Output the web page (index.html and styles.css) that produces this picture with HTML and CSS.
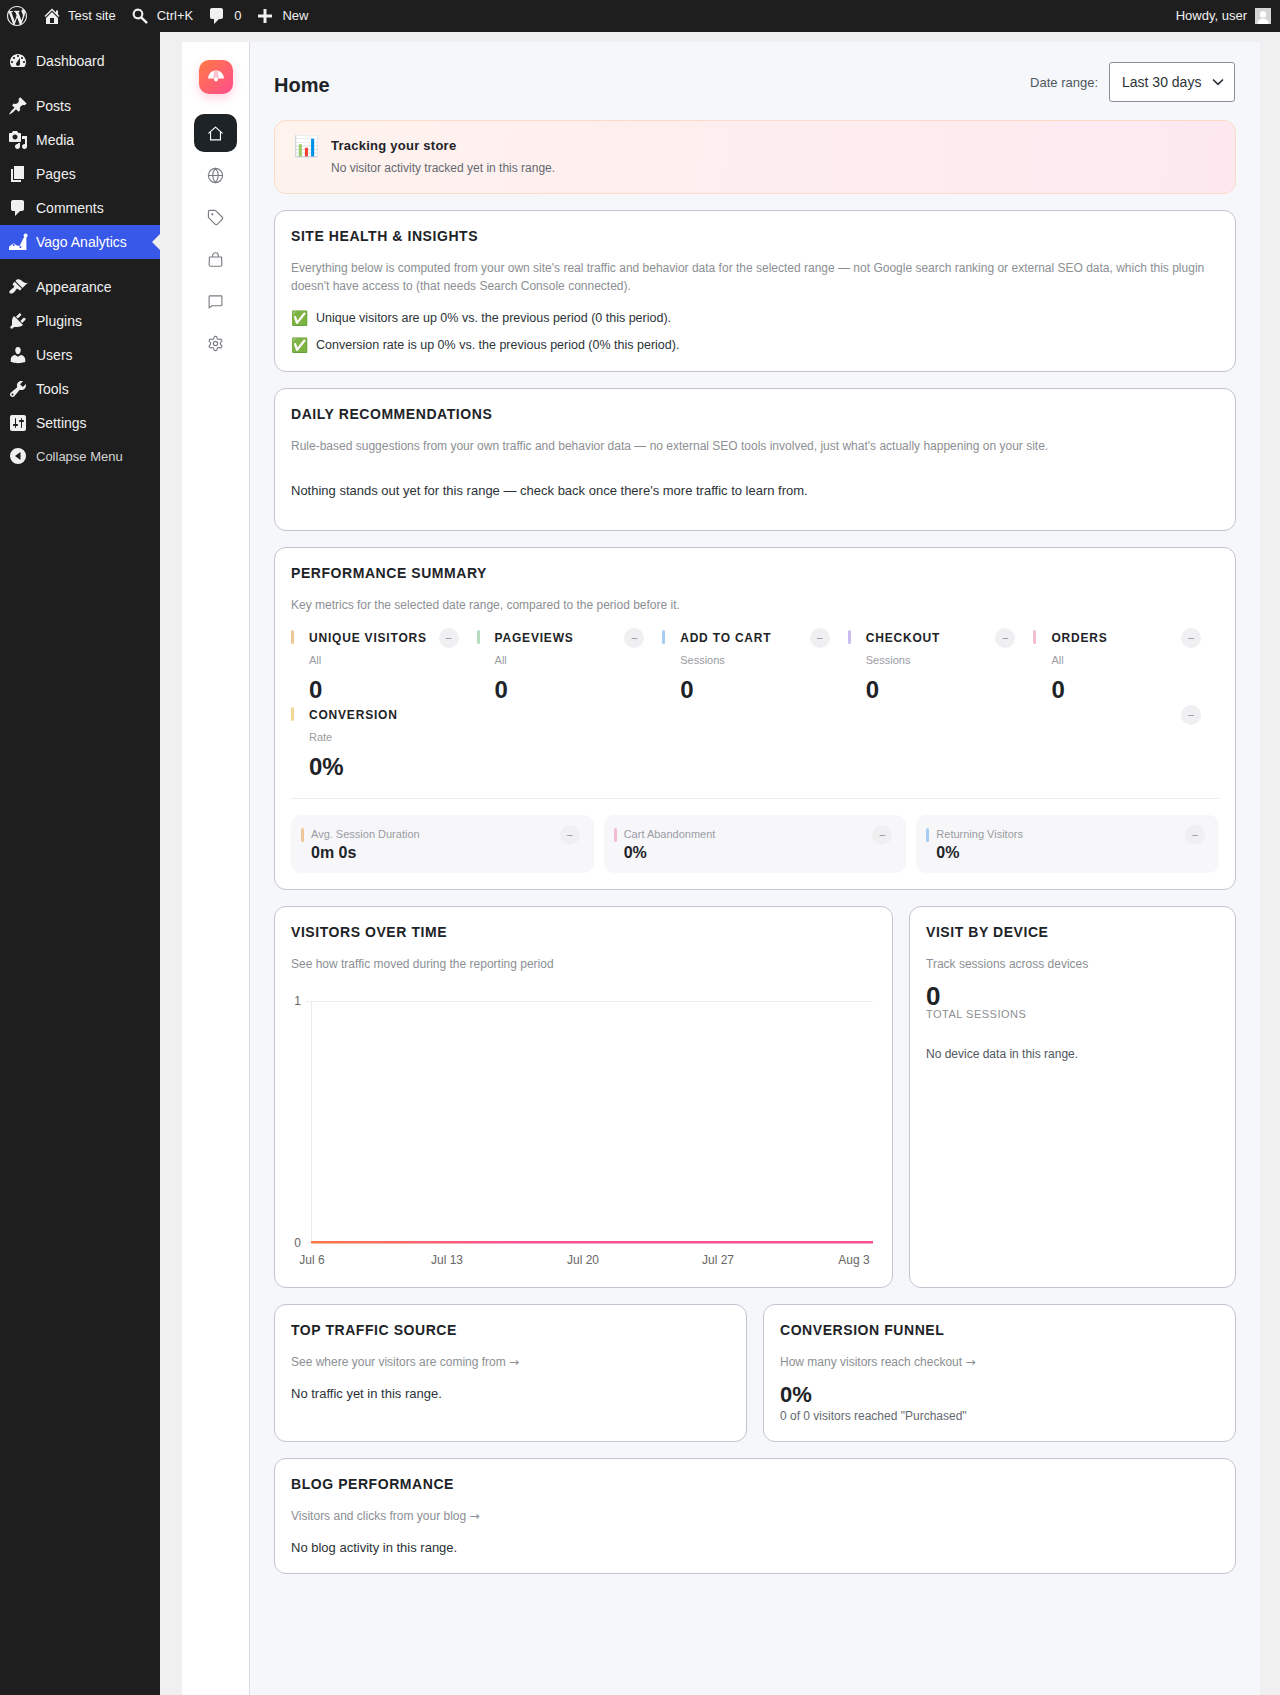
FILE: index.html
```html
<!DOCTYPE html>
<html lang="en">
<head>
    <meta charset="UTF-8">
    <meta name="viewport" content="width=device-width, initial-scale=1.0">
    <title>Home - Vago Analytics</title>
    <link rel="stylesheet" href="styles.css">
</head>
<body>
    <header class="adminbar">
        <div class="adminbar-left">
            <svg class="bar-logo" viewBox="0 0 20 20"><path d="M20 10c0-5.51-4.49-10-10-10C4.48 0 0 4.49 0 10c0 5.52 4.48 10 10 10 5.51 0 10-4.48 10-10zM7.78 15.37L4.37 6.22c.55-.02 1.17-.08 1.17-.08.5-.06.44-1.13-.06-1.11 0 0-1.45.11-2.37.11-.18 0-.37 0-.58-.01C4.12 2.69 6.87 1.11 10 1.11c2.33 0 4.45.87 6.05 2.34-.68-.11-1.65.39-1.65 1.58 0 .74.45 1.36.9 2.1.35.61.55 1.36.55 2.46 0 1.49-1.4 5-1.4 5l-3.03-8.37c.54-.02.82-.17.82-.17.5-.05.44-1.25-.06-1.22 0 0-1.44.12-2.38.12-.87 0-2.33-.12-2.33-.12-.5-.03-.56 1.2-.06 1.22l.92.08 1.26 3.41zM17.41 10c.24-.64.74-1.87.43-4.25.7 1.29 1.05 2.71 1.05 4.25 0 3.29-1.73 6.24-4.4 7.78.97-2.59 1.94-5.2 2.92-7.78zM6.1 18.09C3.12 16.65 1.11 13.53 1.11 10c0-1.3.23-2.48.72-3.59C3.25 10.3 4.67 14.2 6.1 18.09zm4.03-6.63l2.58 6.98c-.86.29-1.76.45-2.71.45-.79 0-1.57-.11-2.29-.33.81-2.38 1.62-4.74 2.42-7.1z"/></svg>
            <a class="bar-item bar-site" href="#">
                <svg viewBox="0 0 20 20"><path d="M16 8.5l1.53 1.53-1.06 1.06L10 4.62l-6.47 6.47-1.06-1.06L10 2.5l4 4v-2h2v4zm-6-2.46l6 5.99V18H4v-5.97zM12 17v-5H8v5h4z"/></svg>
                Test site
            </a>
            <a class="bar-item" href="#">
                <svg viewBox="0 0 20 20"><path fill-rule="evenodd" d="M8 2.5a5.5 5.5 0 0 1 4.6 8.5l4.6 4.6c.5.5.5 1.3 0 1.7-.5.5-1.2.5-1.7 0L10.9 12.7A5.5 5.5 0 1 1 8 2.5zm0 2.2a3.3 3.3 0 1 0 0 6.6 3.3 3.3 0 0 0 0-6.6z"/></svg>
                Ctrl+K
            </a>
            <a class="bar-item" href="#">
                <svg viewBox="0 0 20 20"><path d="M5 2h9c1.1 0 2 .9 2 2v7c0 1.1-.9 2-2 2h-2l-5 5v-5H5c-1.1 0-2-.9-2-2V4c0-1.1.9-2 2-2z"/></svg>
                0
            </a>
            <a class="bar-item" href="#">
                <svg viewBox="0 0 20 20"><path d="M8.5 3h3v5.5H17v3h-5.5V17h-3v-5.5H3v-3h5.5z"/></svg>
                New
            </a>
        </div>
        <div class="adminbar-right">
            Howdy, user
            <svg class="avatar" viewBox="0 0 16 16"><rect width="16" height="16" fill="#d5d5d5"/><circle cx="8" cy="6.4" r="3.2" fill="#fff"/><path d="M2.5 16c0-3.6 2.4-5.6 5.5-5.6s5.5 2 5.5 5.6z" fill="#fff"/></svg>
        </div>
    </header>

    <div class="layout">
        <nav class="sidebar">
            <ul class="menu">
                <li class="menu-item"><svg viewBox="0 0 20 20"><path fill-rule="evenodd" d="M3.76 16h12.48c1.1-1.37 1.76-3.11 1.76-5 0-4.42-3.58-8-8-8s-8 3.58-8 8c0 1.89.66 3.63 1.76 5zM10 4c.55 0 1 .45 1 1s-.45 1-1 1-1-.45-1-1 .45-1 1-1zM6 6c.55 0 1 .45 1 1s-.45 1-1 1-1-.45-1-1 .45-1 1-1zm8 0c.55 0 1 .45 1 1s-.45 1-1 1-1-.45-1-1 .45-1 1-1zm-5.37 5.55L12 7v6c0 1.1-.9 2-2 2s-2-.9-2-2c0-.57.24-1.08.63-1.45zM4 10c.55 0 1 .45 1 1s-.45 1-1 1-1-.45-1-1 .45-1 1-1zm12 0c.55 0 1 .45 1 1s-.45 1-1 1-1-.45-1-1 .45-1 1-1z"/></svg>Dashboard</li>
            </ul>
            <ul class="menu">
                <li class="menu-item"><svg viewBox="0 0 20 20"><path d="M10.44 3.02l1.82-1.82 6.36 6.35-1.83 1.82c-1.05-.68-2.48-.57-3.41.36l-.75.75c-.92.93-1.04 2.35-.35 3.41l-1.83 1.82-2.41-2.41-2.8 2.79c-.42.42-3.38 2.71-3.8 2.29s1.86-3.39 2.28-3.81l2.79-2.79L4.1 9.36l1.83-1.82c1.05.69 2.48.57 3.4-.36l.75-.75c.93-.92 1.05-2.35.36-3.41z"/></svg>Posts</li>
                <li class="menu-item"><svg viewBox="0 0 20 20"><path d="M13 11V4c0-.55-.45-1-1-1h-1.67L9 1H5L3.67 3H2c-.55 0-1 .45-1 1v7c0 .55.45 1 1 1h10c.55 0 1-.45 1-1zM7 4.5c1.38 0 2.5 1.12 2.5 2.5S8.38 9.5 7 9.5 4.5 8.38 4.5 7 5.62 4.5 7 4.5zM14 6h5v10.5c0 1.38-1.12 2.5-2.5 2.5S14 17.88 14 16.5s1.12-2.5 2.5-2.5c.17 0 .34.02.5.05V9h-3V6zm-4 8.05V13h2v3.5c0 1.38-1.12 2.5-2.5 2.5S7 17.88 7 16.5 8.12 14 9.5 14c.17 0 .34.02.5.05z"/></svg>Media</li>
                <li class="menu-item"><svg viewBox="0 0 20 20"><path d="M6 15V2h10v13H6zm-1 1h8v2H3V5h2v11z"/></svg>Pages</li>
                <li class="menu-item"><svg viewBox="0 0 20 20"><path d="M5 2h9c1.1 0 2 .9 2 2v7c0 1.1-.9 2-2 2h-2l-5 5v-5H5c-1.1 0-2-.9-2-2V4c0-1.1.9-2 2-2z"/></svg>Comments</li>
                <li class="menu-item current"><svg viewBox="0 0 20 20"><path d="M1 18v-3.2l4.6-3.6 3.6 2.6h2.6l3.4-7.4 2-2.2 1.2.6V18z"/><circle cx="17.6" cy="3.6" r="2"/><circle cx="5.6" cy="13" r="1" fill="#3858e9"/><circle cx="12.4" cy="15" r="1" fill="#3858e9"/></svg>Vago Analytics</li>
            </ul>
            <ul class="menu">
                <li class="menu-item"><svg viewBox="0 0 20 20"><path d="M14.48 11.06L7.41 3.99l1.5-1.5c.5-.56 2.3-.47 3.51.32 1.21.8 1.43 1.28 2.91 2.1 1.18.64 2.45 1.26 4.45.85zm-.71.71L6.7 4.7 4.93 6.47c-.39.39-.39 1.02 0 1.41l1.06 1.06c.39.39.39 1.03 0 1.42-.6.6-1.43 1.11-2.21 1.69-.35.26-.7.53-1.01.84C1.43 13.23.91 15.28 1.8 16.17c.89.89 2.94.37 4.28-.97.31-.31.58-.66.84-1.01.58-.78 1.09-1.61 1.69-2.21.39-.39 1.03-.39 1.42 0l1.06 1.06c.39.39 1.02.39 1.41 0z"/></svg>Appearance</li>
                <li class="menu-item"><svg viewBox="0 0 20 20"><path d="M13.11 4.36L9.87 7.6 8 5.73l3.24-3.24c.35-.34 1.05-.2 1.56.32.52.51.66 1.21.31 1.55zm-8 1.77l.91-1.12 9.01 9.01-1.19.84c-.71.71-2.63 1.16-3.82 1.16H6.14L4.9 17.26c-.59.59-1.54.59-2.12 0-.59-.58-.59-1.53 0-2.12l1.24-1.24v-3.88c0-1.13.4-3.19 1.09-3.89zm7.26 3.97l3.24-3.24c.34-.35 1.04-.21 1.55.31.52.51.66 1.21.31 1.55l-3.24 3.25z"/></svg>Plugins</li>
                <li class="menu-item"><svg viewBox="0 0 20 20"><path d="M10 9.25c-2.27 0-2.73-3.44-2.73-3.44C7 4.02 7.82 2 9.97 2c2.16 0 2.98 2.02 2.71 3.81 0 0-.41 3.44-2.68 3.44zm0 2.57L12.72 10c2.39 0 4.52 2.33 4.52 4.53v2.49s-3.65 1.13-7.24 1.13c-3.65 0-7.24-1.13-7.24-1.13v-2.49c0-2.25 1.94-4.48 4.47-4.48z"/></svg>Users</li>
                <li class="menu-item"><svg viewBox="0 0 20 20"><path d="M16.68 9.77c-1.34 1.34-3.3 1.67-4.95.99l-5.41 6.52c-.99.99-2.59.99-3.58 0s-.99-2.59 0-3.57l6.52-5.42c-.68-1.65-.35-3.61.99-4.95 1.28-1.28 3.12-1.62 4.72-1.06l-2.89 2.89 2.82 2.82 2.86-2.87c.53 1.58.18 3.39-1.08 4.65zM3.81 16.21c.4.39 1.04.39 1.43 0 .4-.4.4-1.04 0-1.43-.39-.4-1.03-.4-1.43 0-.39.39-.39 1.03 0 1.43z"/></svg>Tools</li>
                <li class="menu-item"><svg viewBox="0 0 20 20"><path d="M18 16V4c0-1.1-.9-2-2-2H4c-1.1 0-2 .9-2 2v12c0 1.1.9 2 2 2h12c1.1 0 2-.9 2-2zM8 11h1c.55 0 1 .45 1 1s-.45 1-1 1H8v1.5c0 .28-.22.5-.5.5s-.5-.22-.5-.5V13H6c-.55 0-1-.45-1-1s.45-1 1-1h1V5.5c0-.28.22-.5.5-.5s.5.22.5.5V11zm5-2h-1c-.55 0-1-.45-1-1s.45-1 1-1h1V5.5c0-.28.22-.5.5-.5s.5.22.5.5V7h1c.55 0 1 .45 1 1s-.45 1-1 1h-1v5.5c0 .28-.22.5-.5.5s-.5-.22-.5-.5V9z"/></svg>Settings</li>
                <li class="menu-item collapse"><svg viewBox="0 0 20 20"><path fill-rule="evenodd" d="M10 2a8 8 0 1 1 0 16 8 8 0 0 1 0-16zm2.5 4L7 10l5.500 4z"/></svg>Collapse Menu</li>
            </ul>
        </nav>

        <div class="wrap">
            <div class="app">
                <aside class="app-nav">
                    <div class="app-logo">
                        <svg viewBox="0 0 20 20"><path d="M2 11.5a8 8 0 0 1 16 0z" fill="#fff"/><path d="M7 11.500L8.300 3.700a8 8 0 0 1 3.400 0L13 11.500z" fill="#ffc4cf"/><circle cx="10" cy="12.500" r="2" fill="#fff"/></svg>
                    </div>
                    <a class="nav-link active" href="#"><svg viewBox="0 0 24 24"><path d="M2.500 11.500 12 3l9.500 8.500M5 9.500V21h14V9.500"/></svg></a>
                    <a class="nav-link" href="#"><svg viewBox="0 0 24 24"><circle cx="12" cy="12" r="10"/><path d="M2 12h20M12 2c-5.300 6-5.300 14 0 20M12 2c5.300 6 5.300 14 0 20"/></svg></a>
                    <a class="nav-link" href="#"><svg viewBox="0 0 24 24"><path d="M12.586 2.586A2 2 0 0 0 11.172 2H4a2 2 0 0 0-2 2v7.172a2 2 0 0 0 .586 1.414l8.704 8.704a2.426 2.426 0 0 0 3.420 0l6.580-6.580a2.426 2.426 0 0 0 0-3.420z"/><circle cx="7.500" cy="7.500" r=".8"/></svg></a>
                    <a class="nav-link" href="#"><svg viewBox="0 0 24 24"><path d="M3.500 8.500h17l.5 11a2 2 0 0 1-2 2H5a2 2 0 0 1-2-2zM8 8.500V6.500a4 4 0 0 1 8 0v2"/></svg></a>
                    <a class="nav-link" href="#"><svg viewBox="0 0 24 24"><path d="M4 4h16a1 1 0 0 1 1 1v12a1 1 0 0 1-1 1H7l-4 3V5a1 1 0 0 1 1-1z"/></svg></a>
                    <a class="nav-link" href="#"><svg viewBox="0 0 24 24"><path d="M12.220 2h-.44a2 2 0 0 0-2 2v.18a2 2 0 0 1-1 1.730l-.43.250a2 2 0 0 1-2 0l-.15-.08a2 2 0 0 0-2.730.730l-.22.380a2 2 0 0 0 .730 2.730l.15.100a2 2 0 0 1 1 1.720v.510a2 2 0 0 1-1 1.740l-.15.090a2 2 0 0 0-.730 2.730l.22.380a2 2 0 0 0 2.730.730l.15-.08a2 2 0 0 1 2 0l.43.250a2 2 0 0 1 1 1.730V20a2 2 0 0 0 2 2h.44a2 2 0 0 0 2-2v-.18a2 2 0 0 1 1-1.730l.43-.250a2 2 0 0 1 2 0l.15.08a2 2 0 0 0 2.730-.730l.22-.390a2 2 0 0 0-.730-2.730l-.15-.08a2 2 0 0 1-1-1.740v-.5a2 2 0 0 1 1-1.740l.15-.090a2 2 0 0 0 .730-2.730l-.22-.380a2 2 0 0 0-2.730-.730l-.15.08a2 2 0 0 1-2 0l-.43-.250a2 2 0 0 1-1-1.730V4a2 2 0 0 0-2-2z"/><circle cx="12" cy="12" r="3"/></svg></a>
                </aside>

                <main class="app-main">
                    <div class="page-head">
                        <h1>Home</h1>
                        <div class="range">
                            <span class="range-label">Date range:</span>
                            <div class="range-select">Last 30 days
                                <svg viewBox="0 0 12 8"><path d="M1 1.500 6 6.300l5-4.800"/></svg>
                            </div>
                        </div>
                    </div>

                    <section class="banner">
                        <span class="banner-icon">📊</span>
                        <div>
                            <div class="banner-title">Tracking your store</div>
                            <div class="banner-text">No visitor activity tracked yet in this range.</div>
                        </div>
                    </section>

                    <section class="card">
                        <h2>Site health &amp; insights</h2>
                        <p class="desc">Everything below is computed from your own site's real traffic and behavior data for the selected range — not Google search ranking or external SEO data, which this plugin doesn't have access to (that needs Search Console connected).</p>
                        <ul class="insights">
                            <li><span class="emoji">✅</span>Unique visitors are up 0% vs. the previous period (0 this period).</li>
                            <li><span class="emoji">✅</span>Conversion rate is up 0% vs. the previous period (0% this period).</li>
                        </ul>
                    </section>

                    <section class="card">
                        <h2>Daily recommendations</h2>
                        <p class="desc">Rule-based suggestions from your own traffic and behavior data — no external SEO tools involved, just what's actually happening on your site.</p>
                        <p class="empty-note">Nothing stands out yet for this range — check back once there's more traffic to learn from.</p>
                    </section>

                    <section class="card">
                        <h2>Performance summary</h2>
                        <p class="desc">Key metrics for the selected date range, compared to the period before it.</p>
                        <div class="metrics">
                            <div class="metric"><i class="tick orange"></i><div class="metric-body"><div class="metric-head"><span class="metric-name">Unique visitors</span><span class="delta">–</span></div><div class="metric-sub">All</div><div class="metric-value">0</div></div></div>
                            <div class="metric"><i class="tick green"></i><div class="metric-body"><div class="metric-head"><span class="metric-name">Pageviews</span><span class="delta">–</span></div><div class="metric-sub">All</div><div class="metric-value">0</div></div></div>
                            <div class="metric"><i class="tick blue"></i><div class="metric-body"><div class="metric-head"><span class="metric-name">Add to cart</span><span class="delta">–</span></div><div class="metric-sub">Sessions</div><div class="metric-value">0</div></div></div>
                            <div class="metric"><i class="tick purple"></i><div class="metric-body"><div class="metric-head"><span class="metric-name">Checkout</span><span class="delta">–</span></div><div class="metric-sub">Sessions</div><div class="metric-value">0</div></div></div>
                            <div class="metric"><i class="tick pink"></i><div class="metric-body"><div class="metric-head"><span class="metric-name">Orders</span><span class="delta">–</span></div><div class="metric-sub">All</div><div class="metric-value">0</div></div></div>
                            <div class="metric"><i class="tick yellow"></i><div class="metric-body"><div class="metric-head"><span class="metric-name">Conversion</span><span class="delta">–</span></div><div class="metric-sub">Rate</div><div class="metric-value">0%</div></div></div>
                        </div>
                        <div class="minis">
                            <div class="mini"><i class="tick orange"></i><div class="mini-body"><div class="mini-label">Avg. Session Duration</div><div class="mini-value">0m 0s</div></div><span class="delta">–</span></div>
                            <div class="mini"><i class="tick pink"></i><div class="mini-body"><div class="mini-label">Cart Abandonment</div><div class="mini-value">0%</div></div><span class="delta">–</span></div>
                            <div class="mini"><i class="tick blue"></i><div class="mini-body"><div class="mini-label">Returning Visitors</div><div class="mini-value">0%</div></div><span class="delta">–</span></div>
                        </div>
                    </section>

                    <div class="row row-chart">
                        <section class="card">
                            <h2>Visitors over time</h2>
                            <p class="desc">See how traffic moved during the reporting period</p>
                            <svg class="chart" viewBox="0 0 585 286">
                                <defs>
                                    <linearGradient id="lineGrad" x1="0" x2="1" y1="0" y2="0">
                                        <stop offset="0" stop-color="#ff7a45"/>
                                        <stop offset=".38" stop-color="#ff4f96"/>
                                        <stop offset="1" stop-color="#ff4f96"/>
                                    </linearGradient>
                                </defs>
                                <path class="grid-line" d="M15 16.500H582M20.500 16V258M15 257.500H21"/>
                                <rect x="20" y="256" width="562" height="2.500" fill="url(#lineGrad)"/>
                                <text x="10" y="20" text-anchor="end">1</text>
                                <text x="10" y="262" text-anchor="end">0</text>
                                <text x="21" y="279" text-anchor="middle">Jul 6</text>
                                <text x="156" y="279" text-anchor="middle">Jul 13</text>
                                <text x="292" y="279" text-anchor="middle">Jul 20</text>
                                <text x="427" y="279" text-anchor="middle">Jul 27</text>
                                <text x="563" y="279" text-anchor="middle">Aug 3</text>
                            </svg>
                        </section>
                        <section class="card">
                            <h2>Visit by device</h2>
                            <p class="desc">Track sessions across devices</p>
                            <div class="device-total">0</div>
                            <div class="device-label">Total sessions</div>
                            <p class="device-empty">No device data in this range.</p>
                        </section>
                    </div>

                    <div class="row row-half">
                        <section class="card">
                            <h2>Top traffic source</h2>
                            <p class="desc">See where your visitors are coming from <span class="arrow">→</span></p>
                            <p class="plain">No traffic yet in this range.</p>
                        </section>
                        <section class="card">
                            <h2>Conversion funnel</h2>
                            <p class="desc">How many visitors reach checkout <span class="arrow">→</span></p>
                            <div class="funnel-value">0%</div>
                            <div class="funnel-sub">0 of 0 visitors reached "Purchased"</div>
                        </section>
                    </div>

                    <section class="card">
                        <h2>Blog performance</h2>
                        <p class="desc">Visitors and clicks from your blog <span class="arrow">→</span></p>
                        <p class="plain">No blog activity in this range.</p>
                    </section>
                </main>
            </div>
        </div>
    </div>
</body>
</html>
```

FILE: styles.css
```css
* {
    box-sizing: border-box;
}

body {
    margin: 0;
    min-height: 1695px;
    background-color: #f0f0f0;
    font-family: "Liberation Sans", Arial, sans-serif;
    color: #1d2327;
    display: flex;
    flex-direction: column;
}

a {
    color: inherit;
    text-decoration: none;
}

/* admin bar */
.adminbar {
    height: 32px;
    background-color: #1e1e1e;
    color: #f0f0f0;
    font-size: 13px;
    display: flex;
    align-items: center;
    justify-content: space-between;
    padding: 0 9px 1px 7px;
}

.adminbar svg {
    fill: #f0f0f0;
}

.adminbar-left,
.adminbar-right,
.bar-item {
    display: flex;
    align-items: center;
}

.bar-logo {
    width: 20px;
    height: 20px;
    margin-right: 15px;
}

.bar-item {
    gap: 7px;
    margin-right: 14px;
}

.bar-item svg {
    width: 20px;
    height: 20px;
}

.bar-site {
    gap: 6px;
}

.adminbar-right {
    gap: 8px;
}

.avatar {
    width: 16px;
    height: 16px;
}

/* wp sidebar */
.layout {
    flex: 1;
    display: flex;
}

.sidebar {
    width: 160px;
    flex-shrink: 0;
    background-color: #1e1e1e;
    padding-top: 12px;
}

.menu {
    list-style-type: none;
    margin: 0 0 11px;
    padding: 0;
}

.menu-item {
    position: relative;
    height: 34px;
    display: flex;
    align-items: center;
    gap: 8px;
    padding-left: 8px;
    font-size: 14px;
    color: #f0f0f0;
}

.menu-item svg {
    width: 20px;
    height: 20px;
    flex-shrink: 0;
    fill: #f0f0f0;
}

.menu-item.current {
    background-color: #3858e9;
    color: #fff;
}

.menu-item.current svg {
    fill: #fff;
}

.menu-item.current::after {
    content: "";
    position: absolute;
    right: 0;
    top: 50%;
    margin-top: -8px;
    border: 8px solid transparent;
    border-right-color: #f0f0f0;
    border-left-width: 0;
}

.menu-item.collapse {
    height: 32px;
    font-size: 13px;
    color: #d5d5d5;
}

/* plugin shell */
.wrap {
    flex: 1;
    min-width: 0;
    padding: 10px 20px 0 22px;
    display: flex;
}

.app {
    flex: 1;
    min-width: 0;
    display: flex;
    background-color: #f5f7fb;
}

.app-nav {
    width: 68px;
    flex-shrink: 0;
    background-color: #fff;
    border-right: 1px solid #dcdcde;
    display: flex;
    flex-direction: column;
    align-items: center;
    padding-top: 18px;
    gap: 4px;
}

.app-logo {
    width: 34px;
    height: 34px;
    margin-bottom: 16px;
    border-radius: 10px;
    background: linear-gradient(135deg, #ff7a45, #ff4d8d);
    box-shadow: 0 4px 10px rgba(255, 77, 141, 0.25);
    display: flex;
    align-items: center;
    justify-content: center;
}

.app-logo svg {
    width: 20px;
    height: 20px;
}

.nav-link {
    width: 43px;
    height: 38px;
    margin-left: -1px;
    border-radius: 10px;
    color: #787c82;
    display: flex;
    align-items: center;
    justify-content: center;
}

.nav-link svg {
    width: 17px;
    height: 17px;
    fill: none;
    stroke: currentColor;
    stroke-width: 1.6;
    stroke-linecap: round;
    stroke-linejoin: round;
}

.nav-link.active {
    background-color: #1d2327;
    color: #fff;
}

.app-main {
    flex: 1;
    min-width: 0;
    padding: 20px 24px 24px;
}

.page-head {
    display: flex;
    justify-content: space-between;
    align-items: center;
    height: 40px;
    margin-bottom: 18px;
}

.page-head h1 {
    margin: 0;
    padding-top: 6px;
    font-size: 20px;
    font-weight: 700;
}

.range {
    display: flex;
    align-items: center;
    gap: 11px;
}

.range-label {
    font-size: 13px;
    color: #50575e;
}

.range-select {
    width: 126px;
    height: 40px;
    padding: 0 10px 0 12px;
    margin-right: 1px;
    background-color: #fff;
    border: 1px solid #8c8f94;
    border-radius: 3px;
    font-size: 14px;
    color: #2c3338;
    display: flex;
    align-items: center;
    justify-content: space-between;
}

.range-select svg {
    width: 12px;
    height: 8px;
    fill: none;
    stroke: #2c3338;
    stroke-width: 1.7;
}

.banner {
    height: 74px;
    margin-bottom: 16px;
    padding: 16px 19px 0;
    display: flex;
    gap: 12px;
    border: 1px solid #fbdcc9;
    border-radius: 12px;
    background: linear-gradient(95deg, #fff3ee, #fde8f0);
}

.banner-icon {
    font-size: 20px;
    line-height: 18px;
}

.banner-title {
    font-size: 13px;
    font-weight: 700;
    letter-spacing: 0.25px;
    line-height: 18px;
}

.banner-text {
    margin-top: 5px;
    font-size: 12px;
    line-height: 16px;
    color: #646970;
}

/* cards */
.card {
    background-color: #fff;
    border: 1px solid #c3c4cf;
    border-radius: 12px;
    padding: 16px;
    margin-bottom: 16px;
}

.card h2 {
    margin: 0;
    font-size: 14px;
    line-height: 18px;
    font-weight: 700;
    letter-spacing: 0.56px;
    text-transform: uppercase;
}

.desc {
    margin: 14px 0 0;
    font-size: 12px;
    line-height: 18px;
    color: #8c8f94;
}

.arrow {
    font-family: "DejaVu Sans", sans-serif;
}

.insights {
    list-style-type: none;
    margin: 14px 0 0;
    padding: 0 0 1px;
    display: flex;
    flex-direction: column;
    gap: 9px;
}

.insights li {
    display: flex;
    align-items: center;
    gap: 8px;
    font-size: 12.5px;
    line-height: 18px;
    color: #2c3338;
}

.emoji {
    font-size: 14px;
    line-height: 18px;
}

.empty-note {
    margin: 11px 0 0;
    padding: 16px 0 14px;
    font-size: 13px;
    line-height: 18px;
    color: #2c3338;
}

/* performance summary */
.metrics {
    display: flex;
    flex-wrap: wrap;
    margin-top: 14px;
    padding-bottom: 16px;
    border-bottom: 1px solid #ececf0;
}

.metric {
    flex: 1 1 20%;
    display: flex;
    gap: 15px;
    padding-right: 18px;
    height: 77px;
}

.tick {
    display: block;
    width: 3px;
    height: 14px;
    margin-top: 2px;
    border-radius: 2px;
    flex-shrink: 0;
}

.tick.orange { background-color: #efc697; }
.tick.green { background-color: #b5dcc0; }
.tick.blue { background-color: #a9cdf1; }
.tick.purple { background-color: #c9bdf0; }
.tick.pink { background-color: #f3bdd0; }
.tick.yellow { background-color: #f1d796; }

.metric-body {
    flex: 1;
    min-width: 0;
}

.metric-head {
    display: flex;
    justify-content: space-between;
    align-items: center;
    height: 20px;
}

.metric-name {
    font-size: 12px;
    font-weight: 700;
    letter-spacing: 0.8px;
    text-transform: uppercase;
    white-space: nowrap;
}

.delta {
    width: 20px;
    height: 20px;
    flex-shrink: 0;
    border-radius: 50%;
    background-color: #f0f0f2;
    color: #8c8f94;
    font-size: 10px;
    line-height: 20px;
    text-align: center;
}

.metric-sub {
    margin-top: 5px;
    font-size: 11px;
    line-height: 14px;
    color: #9a9ca3;
}

.metric-value {
    margin-top: 9px;
    font-size: 24px;
    line-height: 28px;
    font-weight: 700;
}

.minis {
    display: grid;
    grid-template-columns: repeat(3, 1fr);
    gap: 10px;
    margin-top: 16px;
}

.mini {
    height: 58px;
    padding: 10px 14px 0 10px;
    display: flex;
    gap: 7px;
    border-radius: 10px;
    background-color: #f7f7fa;
}

.mini .tick {
    margin-top: 3px;
}

.mini-body {
    flex: 1;
}

.mini-label {
    font-size: 11px;
    line-height: 18px;
    color: #9a9ca3;
}

.mini-value {
    font-size: 16px;
    line-height: 20px;
    font-weight: 700;
}

.row {
    display: grid;
    gap: 16px;
}

.row-chart {
    grid-template-columns: minmax(0, 1fr) 327px;
}

.row-half {
    grid-template-columns: 1fr 1fr;
}

.chart {
    display: block;
    width: 585px;
    height: 286px;
    margin-top: 12px;
}

.chart text {
    font-size: 12px;
    fill: #666;
}

.grid-line {
    fill: none;
    stroke: #ececec;
    stroke-width: 1;
}

.device-total {
    margin-top: 10px;
    font-size: 26px;
    line-height: 26px;
    font-weight: 700;
}

.device-label {
    margin-top: -1px;
    font-size: 11px;
    line-height: 12px;
    letter-spacing: 0.5px;
    text-transform: uppercase;
    color: #8c8f94;
}

.device-empty {
    margin: 25px 0 0;
    font-size: 12px;
    line-height: 18px;
    color: #50575e;
}

.plain {
    margin: 14px 0 0;
    font-size: 13px;
    line-height: 18px;
    color: #2c3338;
}

.funnel-value {
    margin-top: 10px;
    font-size: 22px;
    line-height: 27px;
    font-weight: 700;
}

.funnel-sub {
    padding-bottom: 1px;
    font-size: 12px;
    line-height: 16px;
    color: #646970;
}
```
